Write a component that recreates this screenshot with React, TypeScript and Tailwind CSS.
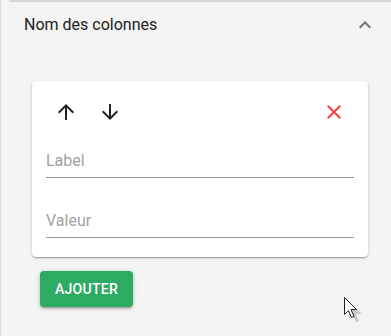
const ArrowUp = () => (
  <svg viewBox="0 0 24 24" className="h-6 w-6" fill="currentColor">
    <path d="M4 12l1.41 1.41L11 7.83V20h2V7.83l5.58 5.59L20 12l-8-8-8 8z" />
  </svg>
);

const ArrowDown = () => (
  <svg viewBox="0 0 24 24" className="h-6 w-6" fill="currentColor">
    <path d="M20 12l-1.41-1.41L13 16.17V4h-2v12.17l-5.58-5.59L4 12l8 8 8-8z" />
  </svg>
);

const Close = () => (
  <svg viewBox="0 0 24 24" className="h-6 w-6" fill="currentColor">
    <path d="M19 6.41L17.59 5 12 10.59 6.41 5 5 6.41 10.59 12 5 17.59 6.41 19 12 13.41 17.59 19 19 17.59 13.41 12z" />
  </svg>
);

const ExpandLess = () => (
  <svg viewBox="0 0 24 24" className="h-6 w-6" fill="currentColor">
    <path d="M12 8l-6 6 1.41 1.41L12 10.83l4.59 4.58L18 14z" />
  </svg>
);

const Field = ({ placeholder }: { placeholder: string }) => (
  <input
    placeholder={placeholder}
    className="block w-full border-b border-[#949494] bg-transparent pt-[6px] pb-[7px] text-base leading-[19px] text-[#212121] outline-none placeholder:text-[#a2a2a2]"
  />
);

export default function App() {
  return (
    <div
      className="relative h-[336px] w-[391px] overflow-hidden border-l border-[#dcdcdc] bg-[#f4f4f4]"
      style={{ fontFamily: "Roboto, 'Liberation Sans', sans-serif" }}
    >
      <div className="ml-2 h-[2px] bg-[#d8d8d8]" />
      <div className="flex h-[46px] items-center justify-between pl-[23px] pr-[14px]">
        <span className="text-base text-[#212121]">Nom des colonnes</span>
        <span className="text-[#707070]">
          <ExpandLess />
        </span>
      </div>

      <div className="ml-[31px] mt-[33px] w-[336px] rounded bg-white px-[14px] pt-[11px] pb-[19px] shadow-[0_1px_3px_rgba(0,0,0,0.2),0_1px_1px_rgba(0,0,0,0.14),0_2px_1px_-1px_rgba(0,0,0,0.12)]">
        <div className="flex items-center">
          <button className="flex h-10 w-10 items-center justify-center text-[#212121]">
            <ArrowUp />
          </button>
          <button className="ml-1 flex h-10 w-10 items-center justify-center text-[#212121]">
            <ArrowDown />
          </button>
          <button className="ml-auto flex h-10 w-10 items-center justify-center text-[#f44336]">
            <Close />
          </button>
        </div>
        <div className="mt-[13px]">
          <Field placeholder="Label" />
        </div>
        <div className="mt-[27px]">
          <Field placeholder="Valeur" />
        </div>
      </div>

      <button className="ml-[39px] mt-[14px] flex h-9 w-[93px] items-center justify-center rounded bg-[#2eab63] text-sm font-medium uppercase tracking-[0.02em] text-white shadow-[0_1px_5px_rgba(0,0,0,0.2),0_2px_2px_rgba(0,0,0,0.14),0_3px_1px_-2px_rgba(0,0,0,0.12)]">
        Ajouter
      </button>

      <svg
        className="absolute left-[341px] top-[296px]"
        width="24"
        height="30"
        viewBox="0 0 24 30"
      >
        <path d="M7 6 L7 23 L11 19 L14 26 L17 25 L14 18 L20 18 Z" fill="rgba(0,0,0,0.18)" />
        <path d="M2.5 1.5 L2.5 18.5 L6.5 14.5 L9.5 21.5 L12 20.5 L9 13.5 L14.5 13.5 Z" fill="white" stroke="#222" strokeWidth="1" strokeLinejoin="round" />
      </svg>
    </div>
  );
}
